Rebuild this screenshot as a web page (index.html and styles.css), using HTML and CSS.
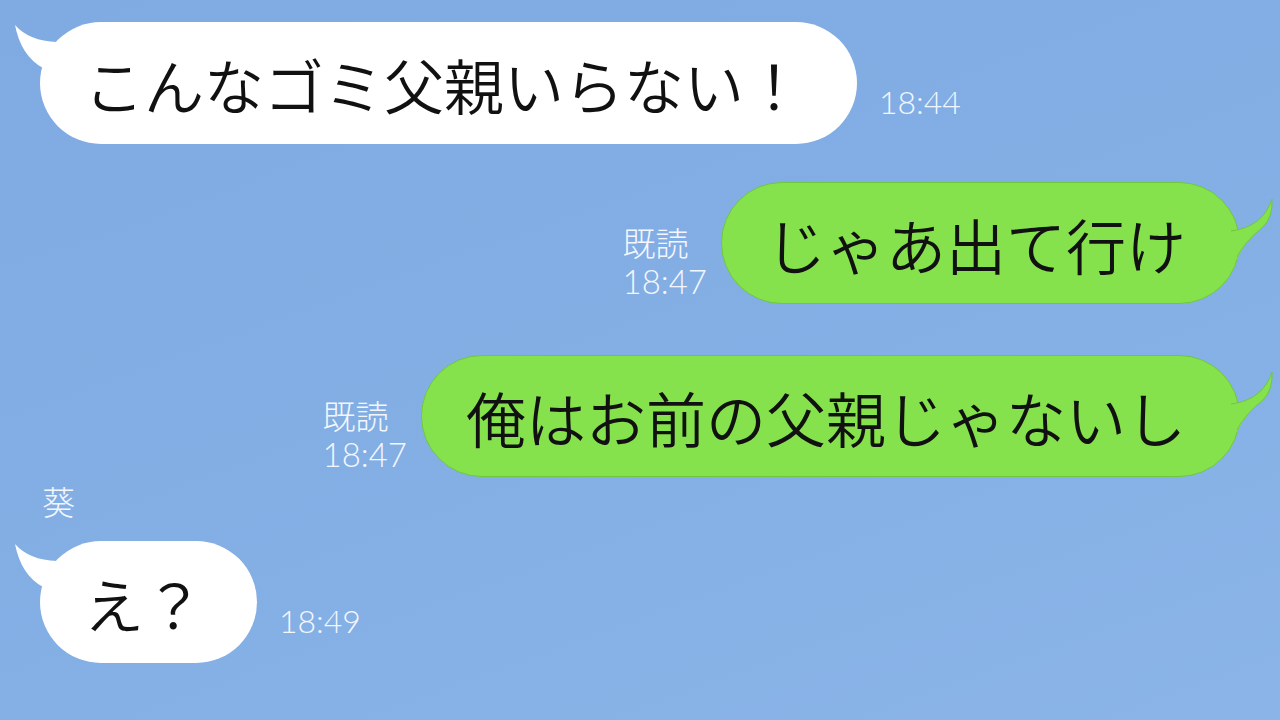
FILE: index.html
```html
<!DOCTYPE html>
<html lang="ja">
<head>
    <meta charset="UTF-8">
    <title>トーク</title>
    <link rel="stylesheet" href="styles.css">
</head>
<body>

<div class="chat">

    <div class="row left first">
        <div class="bubble white">
            <svg class="tail tail-left" width="50" height="50" viewBox="0 0 50 50">
                <path d="M2 3 Q 16 19 44 20 L 48 46 L 30 46 Q 8 34 2 3 Z" fill="#fff"/>
            </svg>
            こんなゴミ父親いらない！
        </div>
        <div class="time">18:44</div>
    </div>

    <div class="row right second">
        <div class="meta">
            <div class="read">既読</div>
            <div class="stamp">18:47</div>
        </div>
        <div class="bubble green">
            <svg class="tail tail-right" width="50" height="64" viewBox="0 0 50 64">
                <path d="M47 2 Q 38 30 6 34 L 2 62 L 12 62 Q 20 44 38 30 Q 48 20 47 2 Z" fill="#86e24c"/>
                <path d="M6 34 Q 38 30 47 2 Q 48 20 38 30 Q 20 44 12 60" fill="none" stroke="#6fc73f" stroke-width="1"/>
            </svg>
            じゃあ出て行け
        </div>
    </div>

    <div class="row right third">
        <div class="meta">
            <div class="read">既読</div>
            <div class="stamp">18:47</div>
        </div>
        <div class="bubble green">
            <svg class="tail tail-right" width="50" height="64" viewBox="0 0 50 64">
                <path d="M47 2 Q 38 30 6 34 L 2 62 L 12 62 Q 20 44 38 30 Q 48 20 47 2 Z" fill="#86e24c"/>
                <path d="M6 34 Q 38 30 47 2 Q 48 20 38 30 Q 20 44 12 60" fill="none" stroke="#6fc73f" stroke-width="1"/>
            </svg>
            俺はお前の父親じゃないし
        </div>
    </div>

    <div class="name">葵</div>

    <div class="row left last">
        <div class="bubble white">
            <svg class="tail tail-left" width="50" height="50" viewBox="0 0 50 50">
                <path d="M2 3 Q 16 19 44 20 L 48 46 L 30 46 Q 8 34 2 3 Z" fill="#fff"/>
            </svg>
            え？
        </div>
        <div class="time">18:49</div>
    </div>

</div>

</body>
</html>
```

FILE: styles.css
```css
body {
    margin: 0;
    padding: 0;
    font-family: "Noto Sans CJK JP", "Noto Sans", sans-serif;
}
.chat {
    width: 1280px;
    height: 720px;
    box-sizing: border-box;
    padding-top: 22px;
    display: flex;
    flex-direction: column;
    overflow: hidden;
    background: linear-gradient(160deg, #7faae2 0%, #83afe5 55%, #8bb5e8 100%);
}
.row {
    display: flex;
    align-items: flex-end;
}
.row.left {
    padding-left: 40px;
}
.row.right {
    justify-content: flex-end;
    padding-right: 40px;
}
.second {
    margin-top: 38px;
}
.third {
    margin-top: 51px;
}
.last {
    margin-top: 20px;
}
.bubble {
    position: relative;
    height: 122px;
    box-sizing: border-box;
    display: flex;
    align-items: center;
    padding: 0 53px 0 44px;
    border-radius: 61px;
    font-size: 60px;
    font-weight: 350;
    color: #111;
    white-space: nowrap;
}
.bubble.white {
    background-color: #fff;
}
.bubble.green {
    background-color: #86e24c;
    border: 1px solid #6fc73f;
}
.tail {
    position: absolute;
    display: block;
}
.tail-left {
    left: -27px;
    top: 0;
}
.tail-right {
    right: -36px;
    top: 14px;
}
.time {
    margin-left: 22px;
    margin-bottom: 26px;
    font-family: Lato, "Noto Sans CJK JP", sans-serif;
    font-size: 32px;
    font-weight: 300;
    line-height: 1;
    color: #f3f7fd;
}
.meta {
    margin-right: 14px;
    margin-bottom: 4px;
    color: #f3f7fd;
}
.read {
    font-size: 33px;
    font-weight: 300;
    line-height: 40px;
}
.stamp {
    font-family: Lato, "Noto Sans CJK JP", sans-serif;
    font-size: 33px;
    font-weight: 300;
    line-height: 38px;
}
.name {
    margin: 4px 0 0 42px;
    font-size: 33px;
    font-weight: 300;
    line-height: 40px;
    color: #f3f7fd;
}
```
